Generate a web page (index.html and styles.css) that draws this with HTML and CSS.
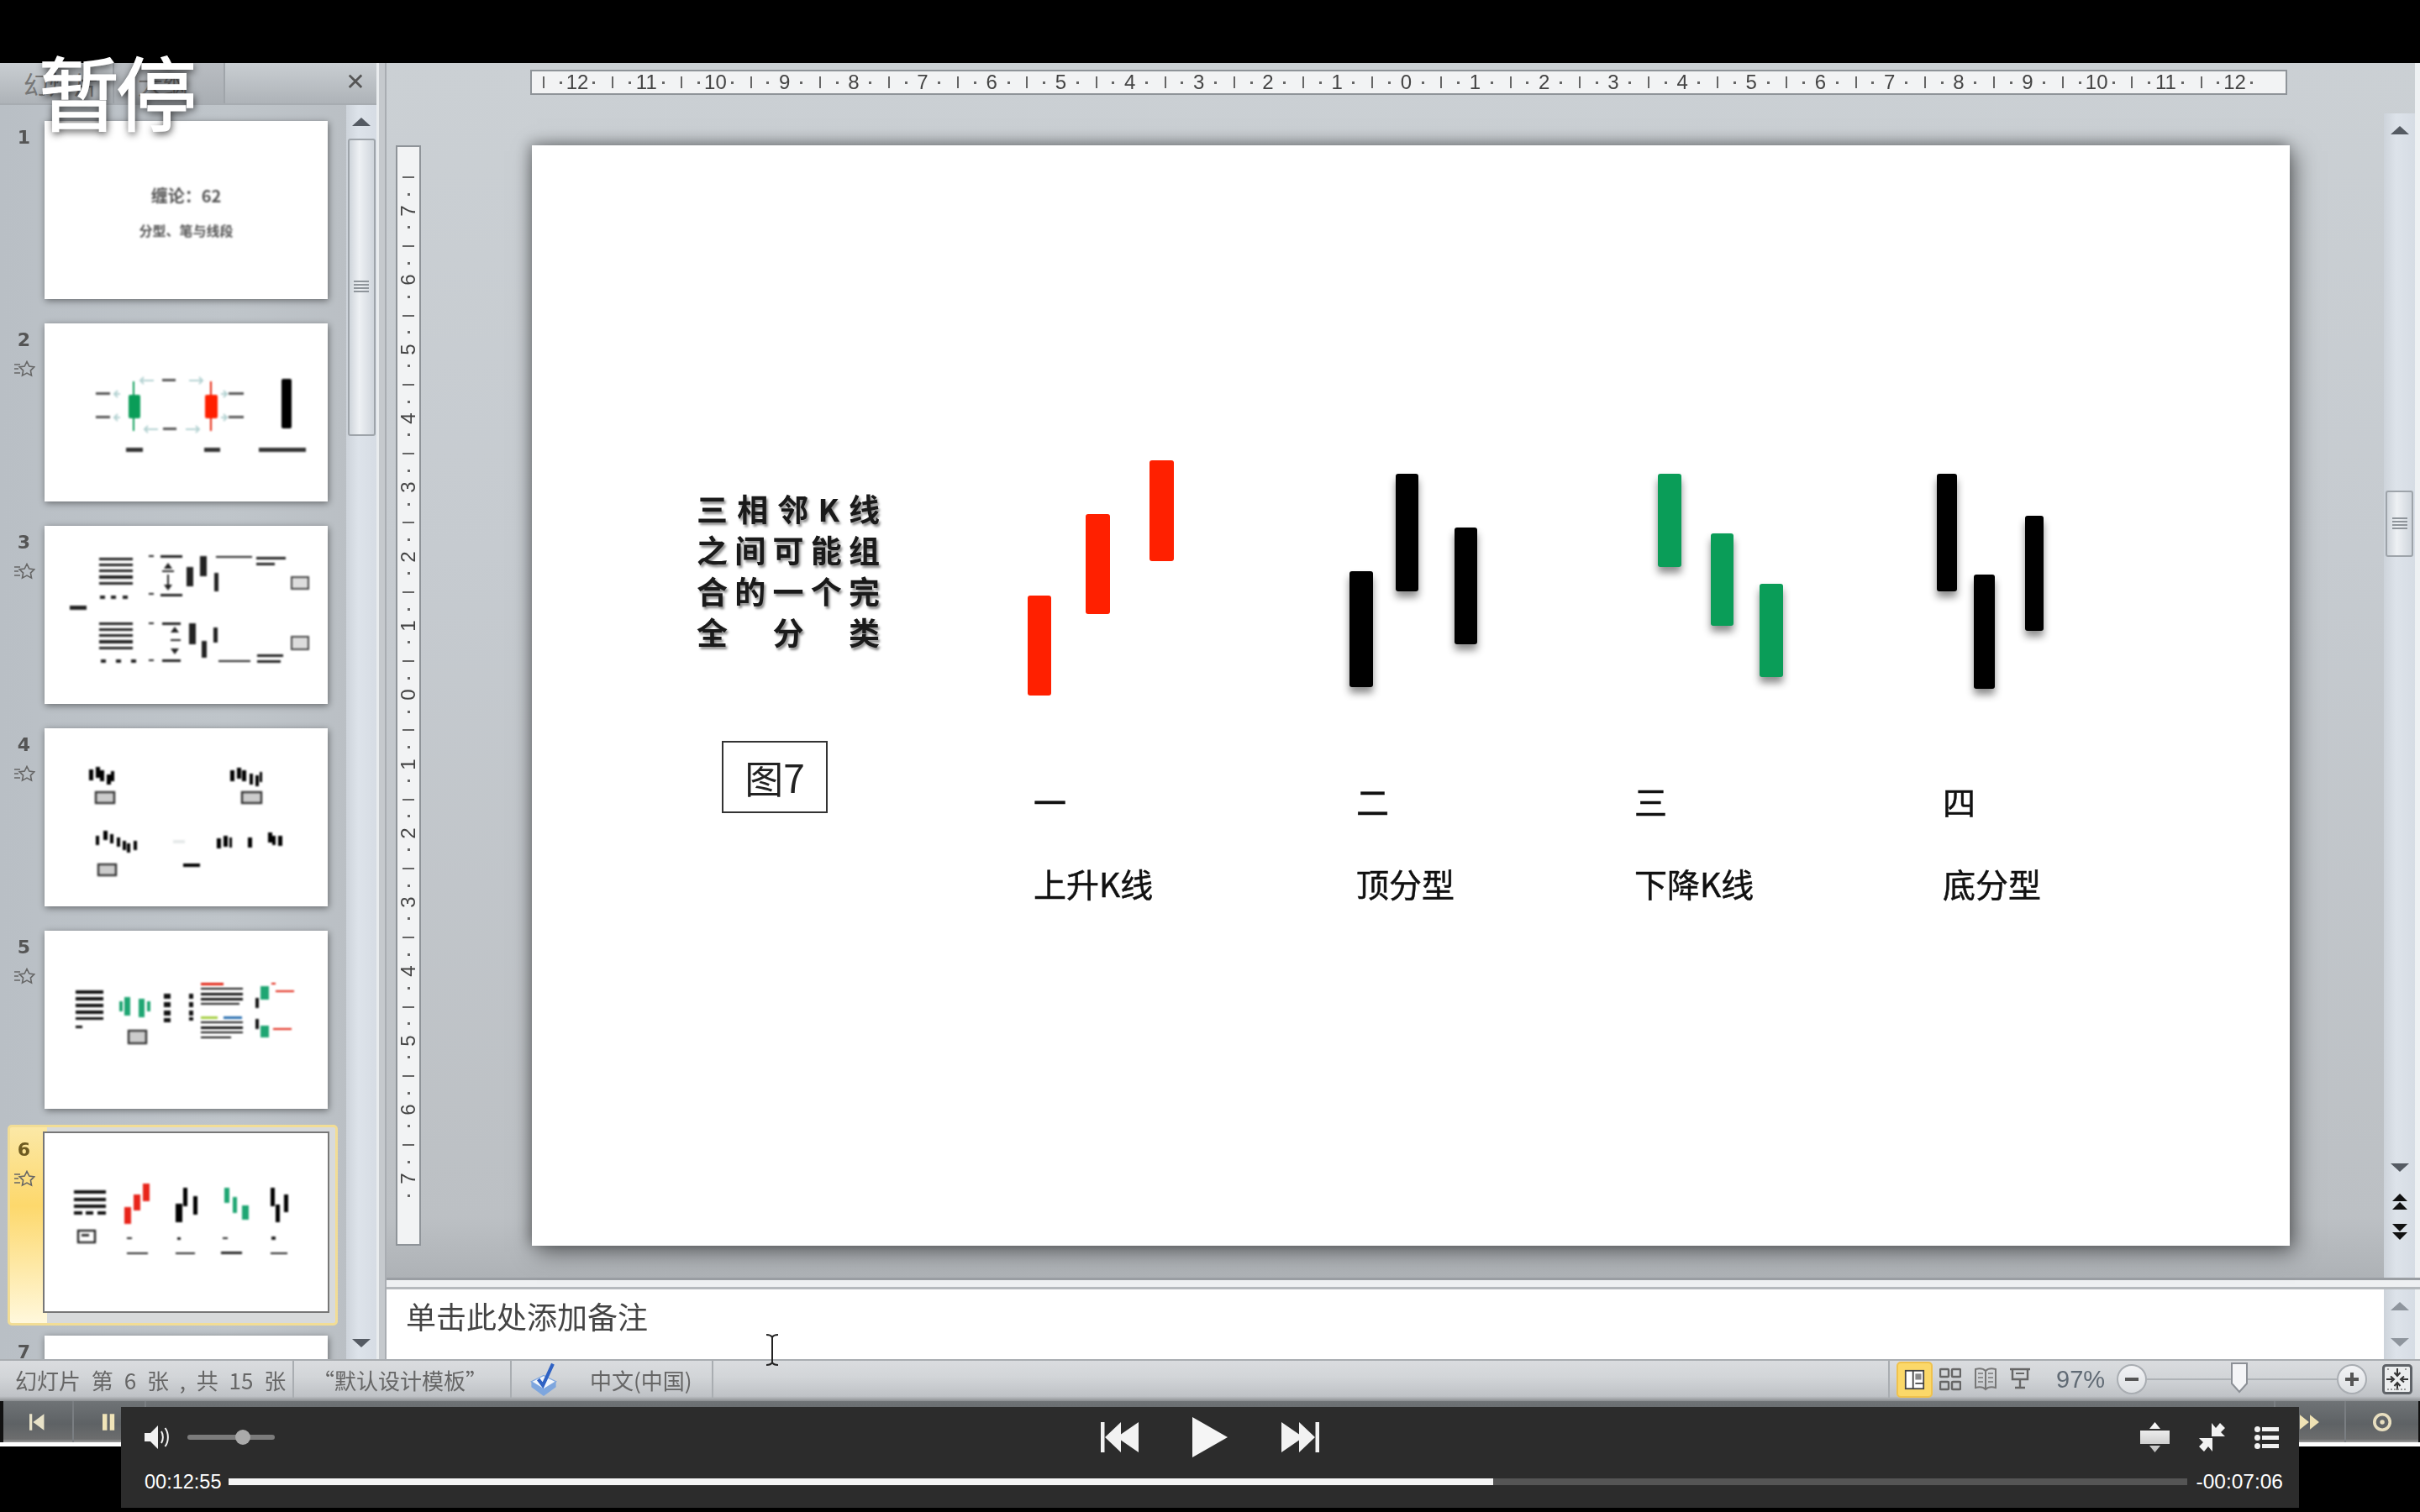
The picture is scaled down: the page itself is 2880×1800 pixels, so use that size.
FILE: index.html
```html
<!DOCTYPE html>
<html lang="zh">
<head>
    <meta charset="utf-8">
    <title>幻灯片 - 暂停</title>
    <link rel="stylesheet" href="styles.css">
</head>
<body>
    <svg class="defs" width="0" height="0">
        <symbol id="star" viewBox="0 0 26 20">
            <path d="M1 5h7M1 10h5M1 15h7" stroke="#666" stroke-width="1.6" fill="none"/>
            <path d="M16 1.5l2.8 5.6 6 .8-4.4 4.2 1.1 6-5.5-3-5.5 3 1.1-6-4.4-4.2 6-.8z" fill="none" stroke="#666" stroke-width="1.6"/>
        </symbol>
    </svg>

    <div class="ppt">
        <div class="workspace">
            <!-- slide list -->
            <aside class="side-panel">
                <div class="side-tabs">
                    <div class="side-tab">幻灯片</div>
                    <div class="side-tab side-tab-second">大纲</div>
                    <div class="side-close">&#10005;</div>
                </div>
                <div class="side-body">
                    <div class="thumb-list">
                        <div class="thumb-row">
                            <div class="thumb-num"><b>1</b></div>
                            <div class="thumb">
                                <p class="thumb-title">缠论：62</p>
                                <p class="thumb-sub">分型、笔与线段</p>
                            </div>
                        </div>
                        <div class="thumb-row">
                            <div class="thumb-num"><b>2</b><svg class="star"><use href="#star"/></svg></div>
                            <div class="thumb">
                                <svg class="thumb-art" viewBox="0 0 337 212">
                                    <path d="M106 69v59" stroke="#0a9d58" stroke-width="2"/>
                                    <rect x="100" y="85" width="14" height="28" rx="2" fill="#0a9d58"/>
                                    <path d="M198 69v59" stroke="#e8240c" stroke-width="2"/>
                                    <rect x="191" y="85" width="15" height="28" rx="2" fill="#ff2000"/>
                                    <rect x="282" y="66" width="12" height="59" rx="2" fill="#000"/>
                                    <g stroke="#b4d2d2" stroke-width="2" fill="none">
                                        <path d="M114 68h16M119 68l-5-0M172 68h16M184 64l4 4-4 4M118 64l-4 4 4 4"/>
                                        <path d="M119 126h16M123 122l-4 4 4 4M168 126h16M180 122l4 4-4 4"/>
                                        <path d="M90 84h-6M87 80l-4 4 4 4M90 112h-6M87 108l-4 4 4 4M210 84h6M213 80l4 4-4 4M210 112h6M213 108l4 4-4 4"/>
                                    </g>
                                    <g fill="#555">
                                        <rect x="140" y="66" width="16" height="3"/>
                                        <rect x="141" y="124" width="16" height="3"/>
                                        <rect x="61" y="82" width="17" height="3"/>
                                        <rect x="61" y="110" width="17" height="3"/>
                                        <rect x="219" y="82" width="18" height="3"/>
                                        <rect x="219" y="110" width="18" height="3"/>
                                    </g>
                                    <g fill="#333">
                                        <rect x="97" y="148" width="20" height="5"/>
                                        <rect x="190" y="148" width="19" height="5"/>
                                        <rect x="255" y="148" width="56" height="5"/>
                                    </g>
                                </svg>
                            </div>
                        </div>
                        <div class="thumb-row">
                            <div class="thumb-num"><b>3</b><svg class="star"><use href="#star"/></svg></div>
                            <div class="thumb">
                                <svg class="thumb-art" viewBox="0 0 337 212">
                                    <g fill="#222">
                                        <rect x="65" y="38" width="40" height="3"/><rect x="65" y="45" width="40" height="3"/>
                                        <rect x="65" y="52" width="40" height="3"/><rect x="65" y="59" width="40" height="4"/>
                                        <rect x="65" y="67" width="40" height="3"/>
                                        <rect x="66" y="83" width="6" height="4"/><rect x="79" y="83" width="6" height="4"/><rect x="93" y="83" width="6" height="4"/>
                                        <rect x="30" y="95" width="20" height="5"/>
                                        <rect x="65" y="115" width="40" height="3"/><rect x="65" y="122" width="40" height="3"/>
                                        <rect x="65" y="129" width="40" height="3"/><rect x="65" y="136" width="40" height="4"/>
                                        <rect x="65" y="144" width="40" height="3"/>
                                        <rect x="67" y="159" width="6" height="4"/><rect x="85" y="159" width="6" height="4"/><rect x="103" y="159" width="6" height="4"/>
                                        <rect x="124" y="35" width="6" height="2"/><rect x="138" y="35" width="26" height="3"/>
                                        <rect x="124" y="80" width="6" height="2"/><rect x="138" y="81" width="26" height="3"/>
                                        <path d="M147 44l-5 7h10zM140 53h14v2h-14zM147 77l-5-7h10zM146 58h2v12h-2z"/>
                                        <rect x="169" y="49" width="8" height="23"/><rect x="185" y="36" width="8" height="24"/><rect x="202" y="56" width="5" height="22"/>
                                        <rect x="204" y="36" width="43" height="2"/>
                                        <rect x="252" y="37" width="35" height="3"/><rect x="252" y="44" width="22" height="3"/>
                                        <rect x="124" y="115" width="6" height="2"/><rect x="140" y="115" width="22" height="3"/>
                                        <rect x="124" y="159" width="6" height="2"/><rect x="140" y="159" width="22" height="3"/>
                                        <path d="M155 120l-5 7h10zM150 135h12v2h-12zM155 153l-5-7h10z"/>
                                        <rect x="172" y="116" width="8" height="25"/><rect x="187" y="137" width="6" height="20"/><rect x="201" y="121" width="5" height="18"/>
                                        <rect x="207" y="160" width="38" height="2"/>
                                        <rect x="253" y="153" width="31" height="3"/><rect x="253" y="160" width="28" height="3"/>
                                    </g>
                                    <g fill="#ddd" stroke="#444" stroke-width="2">
                                        <rect x="294" y="61" width="20" height="14"/>
                                        <rect x="294" y="132" width="20" height="15"/>
                                    </g>
                                </svg>
                            </div>
                        </div>
                        <div class="thumb-row">
                            <div class="thumb-num"><b>4</b><svg class="star"><use href="#star"/></svg></div>
                            <div class="thumb">
                                <svg class="thumb-art" viewBox="0 0 337 212">
                                    <g fill="#000">
                                        <rect x="53" y="49" width="5" height="13"/><rect x="61" y="46" width="5" height="13"/><rect x="66" y="50" width="5" height="13"/>
                                        <rect x="74" y="55" width="5" height="12"/><rect x="79" y="51" width="4" height="12"/>
                                        <rect x="221" y="50" width="5" height="13"/><rect x="229" y="47" width="5" height="13"/><rect x="235" y="50" width="5" height="13"/>
                                        <rect x="244" y="54" width="4" height="13"/><rect x="251" y="56" width="4" height="13"/><rect x="256" y="52" width="3" height="12"/>
                                        <rect x="61" y="128" width="4" height="11"/><rect x="70" y="122" width="5" height="11"/><rect x="78" y="126" width="4" height="11"/>
                                        <rect x="86" y="130" width="4" height="11"/><rect x="93" y="134" width="4" height="11"/><rect x="98" y="137" width="4" height="11"/>
                                        <rect x="106" y="134" width="4" height="11"/>
                                        <rect x="205" y="131" width="5" height="12"/><rect x="213" y="128" width="5" height="13"/><rect x="220" y="130" width="3" height="12"/>
                                        <rect x="242" y="130" width="5" height="12"/>
                                        <rect x="266" y="124" width="5" height="12"/><rect x="271" y="128" width="4" height="11"/><rect x="278" y="128" width="5" height="12"/>
                                        <rect x="165" y="161" width="20" height="4"/>
                                    </g>
                                    <rect x="153" y="133" width="14" height="4" fill="#e6eaea"/>
                                    <g fill="#ccc" stroke="#333" stroke-width="2.400">
                                        <rect x="61" y="76" width="22" height="13"/>
                                        <rect x="235" y="76" width="23" height="13"/>
                                        <rect x="64" y="162" width="21" height="13"/>
                                    </g>
                                </svg>
                            </div>
                        </div>
                        <div class="thumb-row">
                            <div class="thumb-num"><b>5</b><svg class="star"><use href="#star"/></svg></div>
                            <div class="thumb">
                                <svg class="thumb-art" viewBox="0 0 337 212">
                                    <g fill="#111">
                                        <rect x="37" y="71" width="33" height="4"/><rect x="37" y="79" width="33" height="4"/>
                                        <rect x="37" y="87" width="33" height="4"/><rect x="37" y="95" width="33" height="4"/>
                                        <rect x="37" y="103" width="33" height="3"/><rect x="37" y="113" width="8" height="3"/>
                                        <rect x="142" y="75" width="8" height="6"/><rect x="142" y="85" width="8" height="6"/>
                                        <rect x="142" y="95" width="8" height="6"/><rect x="142" y="104" width="8" height="5"/>
                                        <rect x="172" y="75" width="5" height="6"/><rect x="172" y="85" width="5" height="6"/>
                                        <rect x="172" y="95" width="5" height="6"/><rect x="172" y="103" width="5" height="4"/>
                                        <rect x="186" y="68" width="50" height="2"/><rect x="186" y="74" width="50" height="3"/>
                                        <rect x="186" y="80" width="50" height="3"/><rect x="186" y="86" width="46" height="2"/>
                                        <rect x="186" y="108" width="50" height="2"/><rect x="186" y="114" width="50" height="3"/>
                                        <rect x="186" y="120" width="50" height="2"/><rect x="186" y="126" width="36" height="2"/>
                                        <rect x="251" y="80" width="4" height="12"/><rect x="251" y="105" width="4" height="12"/>
                                    </g>
                                    <g fill="#1fa673">
                                        <rect x="89" y="84" width="4" height="12"/><rect x="95" y="79" width="7" height="22"/>
                                        <rect x="112" y="81" width="7" height="22"/><rect x="122" y="84" width="4" height="12"/>
                                        <rect x="257" y="66" width="10" height="16"/><rect x="257" y="113" width="10" height="14"/>
                                    </g>
                                    <g fill="#e02010">
                                        <rect x="186" y="62" width="27" height="3"/><rect x="270" y="62" width="5" height="2"/>
                                        <rect x="275" y="71" width="22" height="2"/><rect x="272" y="116" width="22" height="2"/>
                                    </g>
                                    <rect x="186" y="102" width="20" height="3" fill="#a6cf44"/>
                                    <rect x="213" y="102" width="22" height="3" fill="#2a6fb0"/>
                                    <rect x="100" y="119" width="21" height="15" fill="#ccc" stroke="#333" stroke-width="2.400"/>
                                </svg>
                            </div>
                        </div>
                        <div class="thumb-row is-current">
                            <div class="thumb-num"><b>6</b><svg class="star"><use href="#star"/></svg></div>
                            <div class="thumb">
                                <svg class="thumb-art" viewBox="0 0 337 212">
                                    <g fill="#111">
                                        <rect x="35" y="68" width="38" height="4"/><rect x="35" y="77" width="38" height="4"/>
                                        <rect x="35" y="85" width="38" height="4"/><rect x="35" y="93" width="10" height="4"/>
                                        <rect x="49" y="93" width="9" height="4"/><rect x="63" y="93" width="10" height="4"/>
                                    </g>
                                    <rect x="40" y="116" width="20" height="14" fill="#fff" stroke="#222" stroke-width="2.400"/>
                                    <rect x="44" y="120" width="9" height="3" fill="#333"/>
                                    <g fill="#e8241a">
                                        <rect x="95" y="88" width="8" height="20"/><rect x="106" y="73" width="8" height="19"/><rect x="117" y="60" width="8" height="21"/>
                                    </g>
                                    <g fill="#000">
                                        <rect x="156" y="84" width="8" height="22"/><rect x="165" y="65" width="5" height="22"/><rect x="177" y="75" width="5" height="22"/>
                                        <rect x="269" y="65" width="5" height="22"/><rect x="275" y="85" width="5" height="21"/><rect x="285" y="73" width="5" height="21"/>
                                    </g>
                                    <g fill="#1fa673">
                                        <rect x="214" y="65" width="6" height="18"/><rect x="224" y="76" width="5" height="19"/><rect x="235" y="86" width="8" height="17"/>
                                    </g>
                                    <g fill="#222">
                                        <rect x="98" y="124" width="6" height="2"/><rect x="158" y="124" width="4" height="3"/>
                                        <rect x="212" y="124" width="6" height="2"/><rect x="270" y="123" width="5" height="4"/>
                                        <rect x="98" y="142" width="25" height="2"/><rect x="156" y="142" width="23" height="2"/>
                                        <rect x="210" y="141" width="25" height="3"/><rect x="269" y="142" width="20" height="2"/>
                                    </g>
                                </svg>
                            </div>
                        </div>
                        <div class="thumb-row">
                            <div class="thumb-num"><b>7</b></div>
                            <div class="thumb"></div>
                        </div>
                    </div>
                    <div class="scrollbar side-scroll">
                        <i class="tri-up"></i>
                        <div class="scroll-thumb side-thumb"><span class="grip"></span></div>
                        <i class="tri-down scroll-end"></i>
                    </div>
                </div>
            </aside>

            <div class="splitter-v"></div>

            <!-- editing area -->
            <main class="editor">
                <div class="editor-main">
                    <div class="canvas">
                        <div class="ruler-h">
                            <span>12</span><span>11</span><span>10</span><span>9</span><span>8</span>
                            <span>7</span><span>6</span><span>5</span><span>4</span><span>3</span>
                            <span>2</span><span>1</span><span>0</span><span>1</span><span>2</span>
                            <span>3</span><span>4</span><span>5</span><span>6</span><span>7</span>
                            <span>8</span><span>9</span><span>10</span><span>11</span><span>12</span>
                        </div>
                        <div class="canvas-row">
                            <div class="ruler-v">
                                <span><em>7</em></span><span><em>6</em></span><span><em>5</em></span><span><em>4</em></span>
                                <span><em>3</em></span><span><em>2</em></span><span><em>1</em></span><span><em>0</em></span>
                                <span><em>1</em></span><span><em>2</em></span><span><em>3</em></span><span><em>4</em></span>
                                <span><em>5</em></span><span><em>6</em></span><span><em>7</em></span>
                            </div>
                            <div class="slide">
                                <svg class="slide-art" viewBox="0 0 2092 1310">
                                    <g fill="#ff2000">
                                        <rect x="590" y="536" width="28" height="119" rx="3"/>
                                        <rect x="659" y="439" width="29" height="119" rx="3"/>
                                        <rect x="735" y="375" width="29" height="120" rx="3"/>
                                    </g>
                                    <g class="bars-shadow" fill="#000">
                                        <rect x="973" y="507" width="28" height="138" rx="3"/>
                                        <rect x="1028" y="391" width="27" height="140" rx="3"/>
                                        <rect x="1098" y="455" width="27" height="139" rx="3"/>
                                    </g>
                                    <g class="bars-shadow" fill="#0a9d58">
                                        <rect x="1340" y="391" width="28" height="111" rx="3"/>
                                        <rect x="1403" y="462" width="27" height="110" rx="3"/>
                                        <rect x="1461" y="522" width="28" height="111" rx="3"/>
                                    </g>
                                    <g class="bars-shadow" fill="#000">
                                        <rect x="1672" y="391" width="24" height="140" rx="3"/>
                                        <rect x="1716" y="511" width="25" height="136" rx="3"/>
                                        <rect x="1777" y="441" width="22" height="137" rx="3"/>
                                    </g>
                                </svg>
                                <div class="slide-heading">
                                    <div>三相邻K线</div>
                                    <div>之间可能组</div>
                                    <div>合的一个完</div>
                                    <div>全 分 类</div>
                                </div>
                                <div class="fig-box">图7</div>
                                <div class="kind kind-1"><div>一</div><div>上升K线</div></div>
                                <div class="kind kind-2"><div>二</div><div>顶分型</div></div>
                                <div class="kind kind-3"><div>三</div><div>下降K线</div></div>
                                <div class="kind kind-4"><div>四</div><div>底分型</div></div>
                            </div>
                        </div>
                    </div>
                    <div class="scrollbar main-scroll">
                        <i class="tri-up"></i>
                        <div class="scroll-thumb main-thumb"><span class="grip"></span></div>
                        <i class="tri-down main-down"></i>
                        <div class="page-jump">
                            <i class="tri-up tri-small"></i><i class="tri-up tri-small"></i>
                        </div>
                        <div class="page-jump">
                            <i class="tri-down tri-small"></i><i class="tri-down tri-small"></i>
                        </div>
                    </div>
                    <div class="edge"></div>
                </div>
                <div class="splitter-h"></div>
                <div class="notes">
                    <div class="notes-text">单击此处添加备注</div>
                    <div class="scrollbar notes-scroll">
                        <i class="tri-up tri-pale"></i>
                        <i class="tri-down tri-pale"></i>
                    </div>
                    <div class="edge"></div>
                </div>
            </main>
        </div>

        <footer class="statusbar">
            <div class="status-cell status-count">幻灯片 第 6 张 , 共 15 张</div>
            <div class="status-cell status-theme">“默认设计模板”</div>
            <div class="status-cell status-lang">
                <svg class="check-icon" viewBox="0 0 36 46">
                    <path d="M2 26l16 10 16-10v7L18 45 2 33z" fill="#7ea6de"/>
                    <path d="M2 26l16-8 16 8-16 10z" fill="#f2f6fc" stroke="#7ea6de" stroke-width="1.500"/>
                    <path d="M11 23l6 8L30 3" fill="none" stroke="#2f62c4" stroke-width="4.500"/>
                </svg>
                <span>中文(中国)</span>
            </div>
            <div class="status-right">
                <div class="view-btn view-btn-on">
                    <svg viewBox="0 0 28 28"><rect x="2" y="2" width="24" height="24" fill="#fff" stroke="#444" stroke-width="2"/><path d="M12 2v24M15 19h11" stroke="#444" stroke-width="2"/><rect x="15" y="6" width="8" height="8" fill="#888"/></svg>
                </div>
                <svg class="view-icon" viewBox="0 0 26 30"><g fill="none" stroke="#666" stroke-width="2.400"><rect x="1" y="3" width="10" height="9" rx="1"/><rect x="15" y="3" width="10" height="9" rx="1"/><rect x="1" y="18" width="10" height="9" rx="1"/><rect x="15" y="18" width="10" height="9" rx="1"/></g></svg>
                <svg class="view-icon" viewBox="0 0 26 30"><g fill="none" stroke="#777" stroke-width="2"><path d="M13 5C10 2 5 2 1 3v22c4-1 9-1 12 2 3-3 8-3 12-2V3c-4-1-9-1-12 2zM13 5v22"/><path d="M4 8h6M4 13h6M4 18h6M16 8h6M16 13h6M16 18h6" stroke-width="1.400"/></g></svg>
                <svg class="view-icon" viewBox="0 0 26 30"><g fill="none" stroke="#666" stroke-width="2.400"><path d="M1 3h24M4 4v11h18V4M13 15v9M7 25h12"/><path d="M8 8h10" stroke-width="2"/></g></svg>
                <div class="zoom-value">97%</div>
                <div class="zoom-btn"><span class="zoom-bar"></span></div>
                <div class="zoom-track">
                    <svg class="zoom-thumb" viewBox="0 0 22 38"><path d="M2 2h18v24l-9 10-9-10z" fill="#f4f5f7" stroke="#8c9096" stroke-width="2"/></svg>
                </div>
                <div class="zoom-btn zoom-plus"><span class="zoom-bar"></span></div>
                <svg class="fit-icon" viewBox="0 0 36 36">
                    <rect x="1.500" y="1.500" width="33" height="33" rx="3" fill="#eceeef" stroke="#5f6368" stroke-width="3"/>
                    <path d="M18 5v7M14.500 10l3.500 4 3.500-4M18 31v-7M14.500 26l3.500-4 3.500 4M5 18h7M10 14.500l4 3.500-4 3.500M31 18h-7M26 14.500l-4 3.500 4 3.500" fill="none" stroke="#333" stroke-width="2"/>
                    <path d="M6 6h3M27 6h3M6 30h24" stroke="#999" stroke-width="2" stroke-dasharray="2 2"/>
                </svg>
            </div>
        </footer>

        <div class="showbar">
            <div class="show-cell show-prev"><svg viewBox="0 0 18 22"><path d="M0 2h3v18H0zM4 11L16 2v18z" fill="#e8e2c8"/></svg></div>
            <div class="show-cell show-pause"><svg viewBox="0 0 14 22"><path d="M0 2h5v18H0zM8 2h5v18H8z" fill="#f0e4b8"/></svg></div>
            <div class="show-spacer"></div>
            <div class="show-cell show-next"><svg viewBox="0 0 22 22"><path d="M0 3l10 8-10 8zM11 3l10 8-10 8z" fill="#efe2b4"/></svg></div>
            <div class="show-cell show-dot"><svg viewBox="0 0 24 26"><circle cx="12" cy="13" r="10" fill="none" stroke="#e8dfc0" stroke-width="4"/><circle cx="12" cy="13" r="3" fill="#e8dfc0"/></svg></div>
        </div>
    </div>

    <!-- text cursor over the notes pane -->
    <svg class="ibeam" viewBox="0 0 16 38">
        <path d="M1 1c3 0 6 1 7 3 1-2 4-3 7-3M8 4v30M1 37c3 0 6-1 7-3 1 2 4 3 7 3" fill="none" stroke="#222" stroke-width="2"/>
    </svg>

    <div class="paused">暂停</div>

    <!-- video player controls -->
    <div class="player">
        <div class="player-top">
            <div class="volume">
                <svg class="volume-icon" viewBox="0 0 30 28">
                    <path d="M0 9h7l9-9v28l-9-9H0z" fill="#f2f2f2"/>
                    <path d="M20 7c2.500 4 2.500 10 0 14M24.500 3c4.500 6 4.500 16 0 22" fill="none" stroke="#f2f2f2" stroke-width="2"/>
                </svg>
                <div class="volume-track"><span class="volume-knob"></span></div>
            </div>
            <div class="transport">
                <svg class="transport-skip" viewBox="0 0 45 36"><path d="M0 0h4.500v36H0zM5 18L24 0v14.500L45 0v36L24 21.500V36z" fill="#f2f2f2"/></svg>
                <svg class="transport-play" viewBox="0 0 42 48"><path d="M0 0l42 24L0 48z" fill="#f5f5f5"/></svg>
                <svg class="transport-skip" viewBox="0 0 45 36"><path d="M45 0h-4.500v36H45zM40 18L21 0v14.500L0 0v36l21-14.500V36z" fill="#f2f2f2"/></svg>
            </div>
            <div class="player-tools">
                <svg class="tool-size" viewBox="0 0 35 36">
                    <defs><linearGradient id="sizeFill" x1="0" y1="0" x2="0" y2="1"><stop offset="0" stop-color="#fff"/><stop offset="1" stop-color="#bdbdbd"/></linearGradient></defs>
                    <path d="M17.500 0L24 8H11zM0 10h35v16H0zM17.500 36L11 28h13z" fill="url(#sizeFill)"/>
                </svg>
                <svg class="tool-shrink" viewBox="0 0 35 34">
                    <path d="M17 0l5 6 5-6 6 6-5 5 5 5H17zM18 34l-5-6-5 6-6-6 5-5-5-5h16z" fill="#f2f2f2"/>
                </svg>
                <svg class="tool-list" viewBox="0 0 29 27">
                    <g fill="#f2f2f2"><circle cx="3.500" cy="3.500" r="3.500"/><circle cx="3.500" cy="13.500" r="3.500"/><circle cx="3.500" cy="23.500" r="3.500"/><rect x="9" y="1" width="20" height="5"/><rect x="9" y="11" width="20" height="5"/><rect x="9" y="21" width="20" height="5"/></g>
                </svg>
            </div>
        </div>
        <div class="player-bottom">
            <span class="time">00:12:55</span>
            <div class="progress"><div class="progress-fill" style="width: 64.53%"></div></div>
            <span class="time time-left">-00:07:06</span>
        </div>
    </div>
</body>
</html>
```

FILE: styles.css
```css
* {
    box-sizing: border-box;
}
html, body {
    margin: 0;
    padding: 0;
}
body {
    width: 2880px;
    height: 1800px;
    overflow: hidden;
    position: relative;
    background-color: #000;
    font-family: "Noto Sans CJK SC", "Liberation Sans", sans-serif;
}
.defs {
    position: absolute;
}
.ppt {
    padding-top: 75px;
    filter: blur(0.7px);
}
.workspace {
    display: flex;
    height: 1543px;
}

/* slide list */
.side-panel {
    width: 448px;
    display: flex;
    flex-direction: column;
    background: linear-gradient(90deg, #b9bfc5, #bfc5ca 60%, #b9bec3);
}
.side-tabs {
    height: 50px;
    display: flex;
    background: linear-gradient(#c9ced2, #aeb3b8);
    border-bottom: 2px solid #a7acb1;
}
.side-tab {
    width: 134px;
    padding-left: 28px;
    font-size: 30px;
    line-height: 48px;
    color: #777;
    overflow: hidden;
    white-space: nowrap;
}
.side-tab-second {
    border-left: 2px solid #a0a5aa;
    border-right: 2px solid #a0a5aa;
    background: linear-gradient(#b9bdc2, #a9aeb3);
}
.side-close {
    margin-left: auto;
    width: 50px;
    font-size: 28px;
    line-height: 46px;
    text-align: center;
    color: #555;
    font-family: "DejaVu Sans", sans-serif;
    font-weight: bold;
}
.side-body {
    flex: 1;
    min-height: 0;
    display: flex;
}
.thumb-list {
    width: 412px;
    padding-top: 19px;
    overflow: hidden;
}
.thumb-row {
    display: flex;
    position: relative;
    margin-bottom: 29px;
}
.thumb-row.is-current::before {
    content: "";
    position: absolute;
    left: 9px;
    top: -10px;
    width: 387px;
    height: 233px;
    border: 3px solid #f2dd95;
    border-radius: 5px;
    background: linear-gradient(90deg, transparent 44px, #d8dadb 44px), linear-gradient(#fbe8a6, #fdd86c 40%, #fff8dc);
}
.thumb-num {
    width: 53px;
    position: relative;
    display: flex;
    flex-direction: column;
    align-items: center;
    padding-left: 4px;
    padding-top: 6px;
    font-family: "DejaVu Sans", sans-serif;
    font-size: 22px;
    line-height: 28px;
    color: #555;
}
.thumb-num b {
    display: block;
}
.is-current .thumb-num {
    color: #6d5a20;
}
.star {
    width: 26px;
    height: 20px;
    margin-top: 10px;
}
.thumb {
    width: 337px;
    height: 212px;
    position: relative;
    background-color: #fff;
    box-shadow: 1px 2px 8px rgba(0, 0, 0, 0.45);
    text-align: center;
    overflow: hidden;
}
.is-current .thumb {
    box-shadow: 0 0 0 2px #777;
}
.thumb-title {
    margin: 74px 0 0;
    font-size: 20px;
    line-height: 30px;
    font-weight: bold;
    color: #555;
    filter: blur(1px);
}
.thumb-sub {
    margin: 14px 0 0;
    font-size: 16px;
    line-height: 24px;
    font-weight: bold;
    color: #555;
    filter: blur(1px);
}
.thumb-art {
    display: block;
    width: 337px;
    height: 212px;
    filter: blur(0.9px);
}

/* scrollbars */
.scrollbar {
    display: flex;
    flex-direction: column;
    align-items: center;
    background: linear-gradient(90deg, #cdd3da, #dde3ea 40%, #d6dce4);
}
.side-scroll {
    width: 36px;
    padding-top: 15px;
}
.scroll-thumb {
    display: flex;
    align-items: center;
    justify-content: center;
    border: 2px solid #9ea4aa;
    border-radius: 3px;
    background: linear-gradient(90deg, #cfd5db, #eef1f4 40%, #cfd5dc);
}
.side-thumb {
    width: 33px;
    height: 354px;
    margin-top: 15px;
}
.grip {
    width: 18px;
    height: 16px;
    background: repeating-linear-gradient(#8f959b 0, #8f959b 2px, transparent 2px, transparent 4px);
}
.scroll-end {
    margin-top: auto;
    margin-bottom: 14px;
}
.tri-up, .tri-down {
    display: block;
    width: 0;
    height: 0;
    border-left: 11px solid transparent;
    border-right: 11px solid transparent;
}
.tri-up {
    border-bottom: 10px solid #555b63;
}
.tri-down {
    border-top: 10px solid #555b63;
}
.tri-small {
    border-left-width: 9px;
    border-right-width: 9px;
}
.tri-small.tri-up {
    border-bottom: 9px solid #111;
}
.tri-small.tri-down {
    border-top: 9px solid #111;
}
.tri-pale.tri-up {
    border-bottom-color: #8e959d;
}
.tri-pale.tri-down {
    border-top-color: #8e959d;
}
.splitter-v {
    width: 12px;
    background-color: #c5c9cd;
    border-left: 3px solid #e9ecee;
    border-right: 2px solid #a9adb2;
}

/* editor */
.editor {
    flex: 1;
    min-width: 0;
    display: flex;
    flex-direction: column;
}
.editor-main {
    height: 1446px;
    display: flex;
    background: linear-gradient(#cbd0d4, #c6cbd0 40%, #bcc0c4 95%, #aeb2b6);
}
.canvas {
    flex: 1;
    min-width: 0;
    padding-top: 8px;
}
.ruler-h {
    width: 2091px;
    height: 30px;
    margin-left: 171px;
    padding-left: 13px;
    display: flex;
    background-color: #f2f3f4;
    border: 2px solid #8f9499;
    color: #444;
    font-family: "Liberation Sans", sans-serif;
    font-size: 24px;
    line-height: 26px;
}
.ruler-h span {
    width: 82.2px;
    flex: none;
    text-align: center;
    background:
        linear-gradient(#666, #666) 0 center / 2px 14px no-repeat,
        linear-gradient(#666, #666) 25% center / 3px 3px no-repeat,
        linear-gradient(#666, #666) 75% center / 3px 3px no-repeat;
}
.canvas-row {
    display: flex;
    margin-top: 60px;
    padding-left: 11px;
}
.ruler-v {
    width: 30px;
    height: 1310px;
    margin-right: 132px;
    padding-top: 35px;
    display: flex;
    flex-direction: column;
    background-color: #f2f3f4;
    border: 2px solid #8f9499;
    color: #444;
    font-family: "Liberation Sans", sans-serif;
    font-size: 24px;
}
.ruler-v span {
    height: 82.3px;
    flex: none;
    display: flex;
    align-items: center;
    justify-content: center;
    background:
        linear-gradient(#666, #666) center 0 / 14px 2px no-repeat,
        linear-gradient(#666, #666) center 25% / 3px 3px no-repeat,
        linear-gradient(#666, #666) center 75% / 3px 3px no-repeat;
}
.ruler-v em {
    font-style: normal;
    transform: rotate(-90deg);
}
.slide {
    width: 2092px;
    height: 1310px;
    flex: none;
    position: relative;
    background-color: #fff;
    box-shadow: 6px 7px 26px rgba(0, 0, 0, 0.5), -3px -3px 14px rgba(0, 0, 0, 0.28);
}
.slide-art {
    position: absolute;
    left: 0;
    top: 0;
    width: 2092px;
    height: 1310px;
}
.bars-shadow {
    filter: drop-shadow(0 7px 5px rgba(0, 0, 0, 0.45));
}
.slide-heading {
    position: absolute;
    left: 196px;
    top: 408px;
    width: 218px;
    font-size: 37px;
    line-height: 49px;
    font-weight: bold;
    color: #1a1a1a;
    text-shadow: 2px 3px 3px rgba(0, 0, 0, 0.45);
}
.slide-heading div {
    text-align: justify;
    text-align-last: justify;
}
.fig-box {
    position: absolute;
    left: 226px;
    top: 709px;
    width: 126px;
    height: 86px;
    border: 2px solid #333;
    font-size: 46px;
    line-height: 80px;
    text-align: center;
    color: #222;
}
.kind {
    position: absolute;
    top: 755px;
    font-size: 39px;
    line-height: 50px;
    color: #111;
    white-space: nowrap;
    -webkit-text-stroke: 0.5px #111;
}
.kind div + div {
    margin-top: 48px;
}
.kind-1 {
    left: 597px;
}
.kind-2 {
    left: 981px;
}
.kind-3 {
    left: 1312px;
}
.kind-4 {
    left: 1679px;
}
.main-scroll {
    width: 37px;
    margin-top: 60px;
    padding-top: 15px;
}
.main-thumb {
    width: 33px;
    height: 79px;
    margin-top: 424px;
}
.main-down {
    margin-top: auto;
    margin-bottom: 26px;
}
.page-jump {
    height: 26px;
    display: flex;
    flex-direction: column;
    align-items: center;
    gap: 1px;
    margin-bottom: 10px;
}
.page-jump:last-child {
    margin-bottom: 38px;
}
.edge {
    width: 6px;
    background-color: #eef1f3;
}
.splitter-h {
    height: 14px;
    background-color: #eef0f2;
    border-top: 3px solid #9a9ea3;
    border-bottom: 3px solid #b5b9bd;
}
.notes {
    flex: 1;
    display: flex;
    background-color: #fff;
}
.notes-text {
    flex: 1;
    padding: 6px 0 0 23px;
    font-size: 36px;
    line-height: 50px;
    color: #444;
}
.notes-scroll {
    width: 37px;
    padding-top: 15px;
    gap: 33px;
}

/* status bar */
.statusbar {
    height: 50px;
    display: flex;
    align-items: center;
    padding-bottom: 4px;
    background: linear-gradient(#dadcdf, #d2d5d8 40%, #bfc2c6 88%, #8c8f92);
    border-top: 2px solid #a9adb1;
    color: #666;
    font-size: 26px;
}
.status-cell {
    height: 100%;
    display: flex;
    align-items: center;
    border-right: 2px solid #a9adb1;
    white-space: nowrap;
}
.status-count {
    width: 350px;
    padding-left: 18px;
    word-spacing: 7px;
}
.status-theme {
    width: 259px;
    padding-left: 22px;
}
.status-lang {
    width: 240px;
    padding-left: 20px;
    gap: 37px;
}
.check-icon {
    width: 36px;
    height: 42px;
}
.status-right {
    margin-left: auto;
    width: 633px;
    height: 100%;
    padding-left: 8px;
    display: flex;
    align-items: center;
    border-left: 2px solid #a9adb1;
}
.view-btn {
    width: 43px;
    height: 43px;
    flex: none;
    padding: 7px;
    border-radius: 5px;
    background-color: #fbd869;
    border: 2px solid #f0c24c;
    margin-right: 8px;
}
.view-btn svg {
    display: block;
    width: 100%;
    height: 100%;
}
.view-icon {
    width: 26px;
    height: 30px;
    flex: none;
    margin-right: 15.500px;
}
.zoom-value {
    width: 72px;
    margin-left: 14.500px;
    font-family: "Liberation Sans", sans-serif;
    font-size: 29px;
    color: #606a74;
}
.zoom-btn {
    width: 36px;
    height: 36px;
    flex: none;
    display: flex;
    align-items: center;
    justify-content: center;
    position: relative;
    border: 2px solid #a9adb2;
    border-radius: 50%;
    background: linear-gradient(#f2f3f5, #dcdfe2);
}
.zoom-bar {
    width: 16px;
    height: 4px;
    background-color: #555;
}
.zoom-plus::after {
    content: "";
    position: absolute;
    width: 4px;
    height: 16px;
    background-color: #555;
}
.zoom-track {
    width: 226px;
    height: 2px;
    flex: none;
    position: relative;
    background-color: #aeb2b6;
}
.zoom-thumb {
    position: absolute;
    left: 99px;
    top: -20px;
    width: 22px;
    height: 38px;
}
.fit-icon {
    width: 36px;
    height: 36px;
    margin-left: 18px;
}

/* slide show toolbar, mostly behind the player */
.showbar {
    height: 54px;
    display: flex;
    background: linear-gradient(#6f7376, #5e6265 55%, #6c6d6e 92%, #9a9a9a);
    border-bottom: 5px solid #fff;
}
.show-cell {
    display: flex;
    align-items: center;
    justify-content: center;
    border-right: 2px solid #7a7e82;
}
.show-cell svg {
    height: 24px;
}
.show-prev {
    width: 88px;
    border-left: 4px solid #111;
}
.show-pause {
    width: 86px;
}
.show-spacer {
    flex: 1;
}
.show-next {
    width: 86px;
    border-left: 2px solid #7a7e82;
}
.show-dot {
    width: 88px;
    border-right: 2px solid #111;
}

/* overlays */
.ibeam {
    position: absolute;
    left: 911px;
    top: 1588px;
    width: 16px;
    height: 38px;
}
.paused {
    position: absolute;
    left: 46px;
    top: 45px;
    font-size: 96px;
    line-height: 124px;
    letter-spacing: -4px;
    color: #fff;
    -webkit-text-stroke: 1.500px #fff;
    text-shadow: 1px 3px 10px rgba(0, 0, 0, 0.85);
}

/* player */
.player {
    position: absolute;
    left: 144px;
    top: 1675px;
    width: 2592px;
    height: 120px;
    background-color: #2c2c2c;
    color: #fff;
    font-family: "Liberation Sans", sans-serif;
}
.player-top {
    height: 72px;
    display: grid;
    grid-template-columns: 1fr auto 1fr;
    align-items: center;
    padding: 0 26px;
}
.volume {
    display: flex;
    align-items: center;
    gap: 21px;
    padding-left: 2px;
}
.volume-icon {
    width: 30px;
    height: 28px;
}
.volume-track {
    width: 104px;
    height: 6px;
    position: relative;
    border-radius: 3px;
    background-color: #7b7b7b;
}
.volume-knob {
    position: absolute;
    left: 57px;
    top: -6px;
    width: 18px;
    height: 18px;
    border-radius: 50%;
    background-color: #aaa;
}
.transport {
    display: flex;
    align-items: center;
    gap: 64px;
}
.transport-skip {
    width: 45px;
    height: 36px;
}
.transport-play {
    width: 42px;
    height: 48px;
}
.player-tools {
    justify-content: flex-end;
    display: flex;
    align-items: center;
    gap: 33px;
    margin-right: -2px;
}
.tool-size {
    width: 35px;
    height: 36px;
}
.tool-shrink {
    width: 35px;
    height: 34px;
}
.tool-list {
    width: 29px;
    height: 27px;
}
.player-bottom {
    display: flex;
    align-items: center;
    height: 34px;
    padding: 0 19px 0 28px;
}
.time {
    font-size: 23.500px;
    white-space: nowrap;
}
.time-left {
    font-size: 24.500px;
}
.progress {
    flex: 1;
    height: 8px;
    margin: 0 10px 0 9px;
    background-color: #555;
}
.progress-fill {
    height: 100%;
    background-color: #f5f5f5;
}
```
